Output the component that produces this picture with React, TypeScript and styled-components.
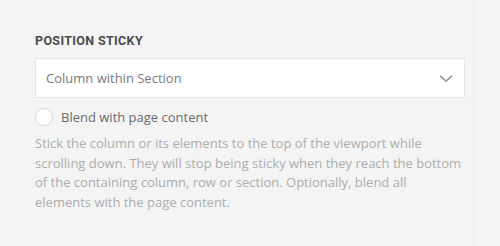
import React from 'react';
import styled, { createGlobalStyle } from 'styled-components';

const GlobalStyle = createGlobalStyle`
  html, body {
    margin: 0;
    padding: 0;
    background: #f4f4f4;
  }
  body {
    font-family: 'Open Sans', 'Liberation Sans', sans-serif;
  }
`;

const Panel = styled.div`
  width: 474px;
  height: 246px;
  box-sizing: border-box;
  padding: 34px 10px 0 35px;
  background: #f4f4f4;
  border-right: 1px solid #eeeeee;
`;

const Label = styled.div`
  font-family: Roboto, 'Liberation Sans', sans-serif;
  font-weight: 700;
  font-size: 12.5px;
  line-height: 13px;
  color: #4a4a4a;
  letter-spacing: 0.35px;
  margin-bottom: 11px;
`;

const Select = styled.div`
  width: 430px;
  height: 40px;
  box-sizing: border-box;
  background: #fff;
  border: 1px solid #e6e6e6;
  display: flex;
  align-items: center;
  justify-content: space-between;
  padding: 0 11px 0 10px;
  font-size: 13px;
  color: #7a7a7a;
`;

const Check = styled.label`
  display: flex;
  align-items: center;
  gap: 8px;
  margin-top: 10px;
  font-size: 13px;
  color: #6a6a6a;
`;

const Circle = styled.span`
  width: 18px;
  height: 18px;
  box-sizing: border-box;
  border-radius: 50%;
  border: 1px solid #d8d8d8;
  background: #fff;
`;

const Help = styled.p`
  margin: 8px 0 0;
  width: 430px;
  font-size: 13px;
  line-height: 19.5px;
  color: #adadad;
`;

function Chevron() {
  return (
    <svg width="14" height="9" viewBox="0 0 14 9">
      <path d="M1 1.8 L7 7.2 L13 1.8" fill="none" stroke="#999" strokeWidth="1.7" />
    </svg>
  );
}

export default function App() {
  return (
    <>
      <GlobalStyle />
      <Panel>
        <Label>POSITION STICKY</Label>
        <Select>
          <span>Column within Section</span>
          <Chevron />
        </Select>
        <Check>
          <Circle />
          <span>Blend with page content</span>
        </Check>
        <Help>
          Stick the column or its elements to the top of the viewport while scrolling down. They
          will stop being sticky when they reach the bottom of the containing column, row or
          section. Optionally, blend all elements with the page content.
        </Help>
      </Panel>
    </>
  );
}
